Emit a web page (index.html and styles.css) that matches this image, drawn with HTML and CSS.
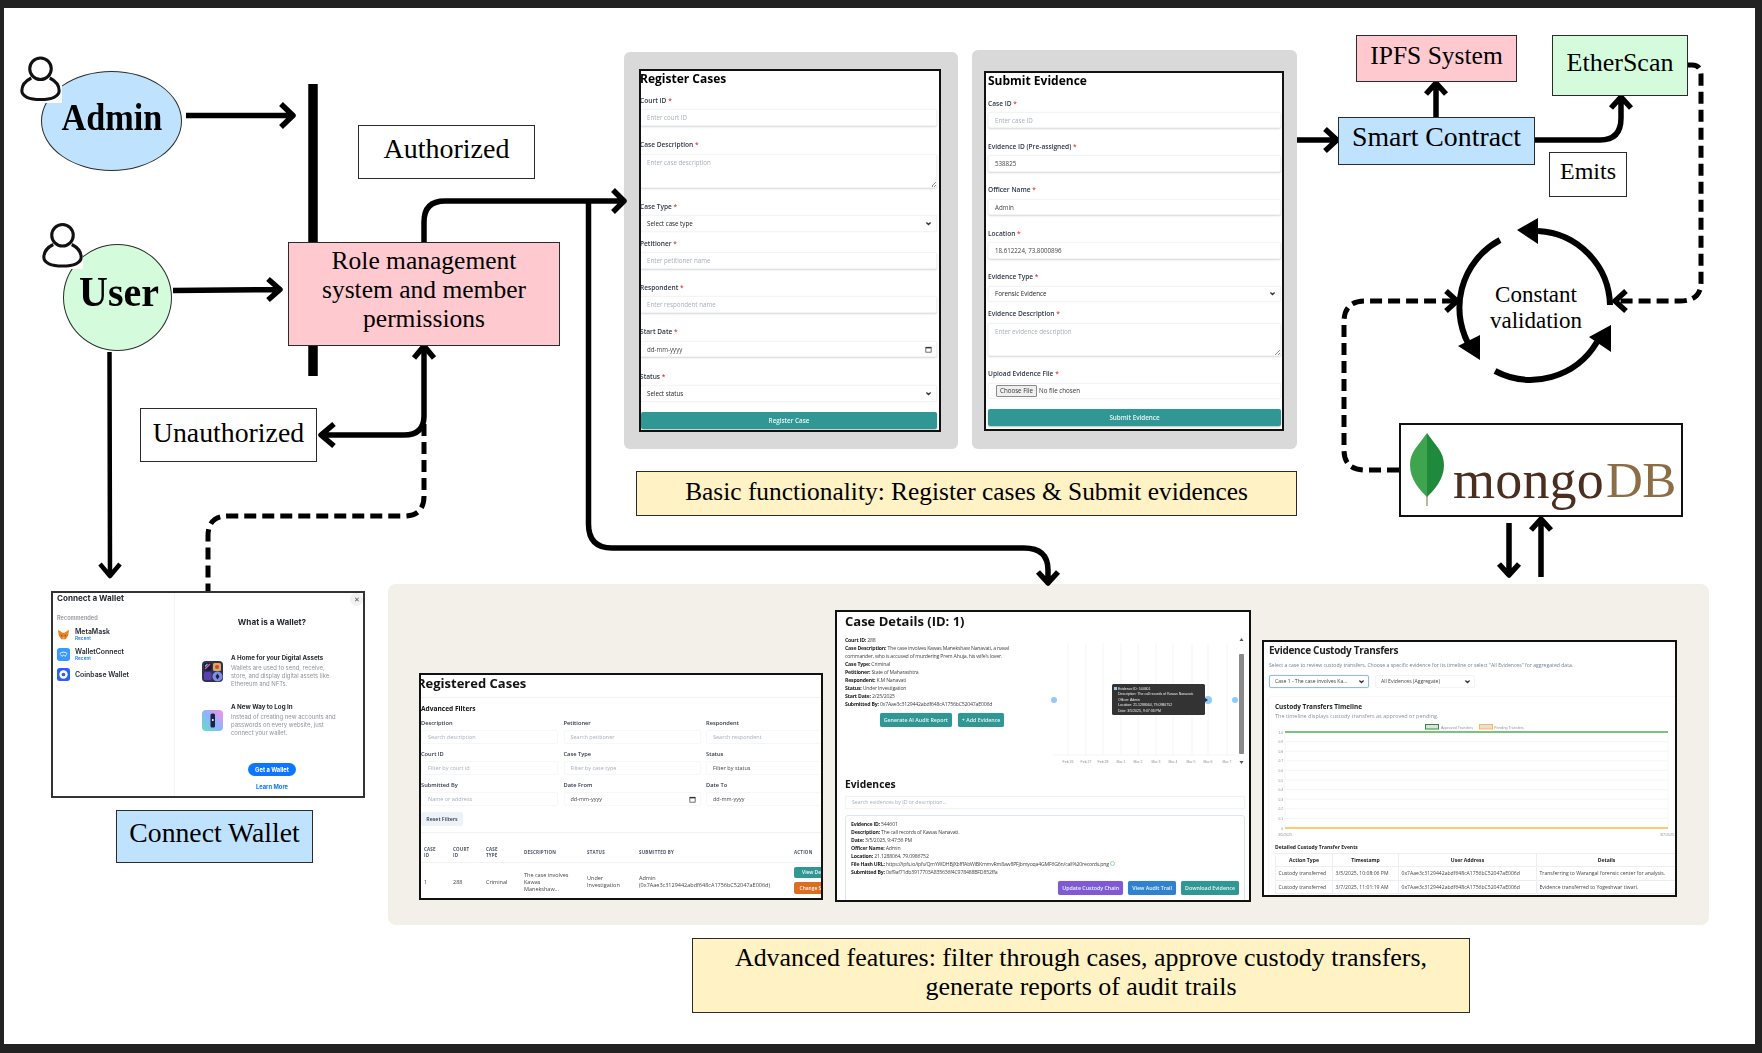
FILE: index.html
```html
<!DOCTYPE html>
<html lang="en">
<head>
<meta charset="utf-8">
<title>Evidence management workflow</title>
<link rel="stylesheet" href="styles.css">
</head>
<body>
<svg class="defs" width="0" height="0" aria-hidden="true">
  <symbol id="chev" viewBox="0 0 10 10"><path d="M2 3.5 5 6.5 8 3.5" fill="none" stroke="#333" stroke-width="1.8"/></symbol>
  <symbol id="cal" viewBox="0 0 10 10"><rect x="1.2" y="1.8" width="7.6" height="7" fill="none" stroke="#333" stroke-width="1"/><rect x="1.2" y="1.4" width="7.6" height="2" fill="#333"/></symbol>
  <symbol id="person" viewBox="0 0 40 46"><circle cx="20" cy="14" r="10.5" fill="none" stroke="#111" stroke-width="3"/><path d="M11 23C5 26 1.8 31 1.8 35.5 1.8 41 9 44 20 44S38.200 41 38.200 35.500C38.200 31 35 26 29 23" fill="none" stroke="#111" stroke-width="3"/></symbol>
</svg>

<main class="page">
  <div class="sheet"></div>
  <div class="gray gray-register"></div>
  <div class="gray gray-submit"></div>
  <div class="beige"></div>

  <svg class="wires" viewBox="0 0 1762 1053" width="1762" height="1053" aria-hidden="true">
    <path d="M313 84V376" fill="none" stroke="#000" stroke-width="9.500"/>
    <g fill="none" stroke="#000" stroke-width="5.500" stroke-linejoin="round">
      <path d="M186 115.500H292M281 104 293 115.500 281 127"/>
      <path d="M173 290.500 279 289.500M268 279 280 289.500 268 300"/>
      <path stroke-width="4.500" d="M109.500 352 110 574M100 564 110 576 120 564"/>
      <path d="M424 345V416Q424 435 404 435H322M334 424 321 435 334 446"/>
      <path d="M414 358 424 346 434 358"/>
      <path d="M424 242V222Q424 201 445 201H623M613 190 624 201 613 212"/>
      <path d="M588.500 201V524Q588.500 548 612 548H1024Q1048 548 1048 570V582M1038 572 1048 583 1058 572"/>
      <path d="M1297 140H1336M1325 129 1337 140 1325 151"/>
      <path d="M1436 117V84M1426 94 1436 83 1446 94"/>
      <path d="M1535 140H1600Q1621 140 1621 118V98M1611 108 1621 97 1631 108"/>
      <path d="M1509 523V574M1499 564 1509 575 1519 564"/>
      <path d="M1541 577V520M1531 530 1541 519 1551 530"/>
      <path d="M1446 291 1457 301 1446 311"/>
      <path d="M1626 291 1615 301 1626 311"/>
    </g>
    <g fill="none" stroke="#000" stroke-width="5" stroke-dasharray="12 6">
      <path d="M424 424V496Q424 516 404 516H228Q208 516 208 536V592"/>
      <path d="M1688 65H1692Q1701 65 1701 75V282Q1701 301 1680 301H1618"/>
      <path d="M1399 470H1365Q1344 470 1344 450V322Q1344 301 1365 301H1455"/>
    </g>
    <g fill="none" stroke="#000" stroke-width="6">
      <path d="M1610 305A76 76 0 0 0 1538 231"/>
      <path d="M1500 240A77 77 0 0 0 1472 350"/>
      <path d="M1495 371A77 77 0 0 0 1597 342"/>
    </g>
    <path d="M1517 230 1538 218V244ZM1458 346 1480 335V360ZM1589 337 1611 325V352Z"/>
  </svg>

  <div class="oval admin"><span class="admin-word">Admin</span></div>
  <div class="oval user"><span class="user-word">User</span></div>
  <svg class="person person-admin"><use href="#person"/></svg>
  <svg class="person person-user"><use href="#person"/></svg>

  <div class="box authorized"><span>Authorized</span></div>
  <div class="box unauthorized"><span>Unauthorized</span></div>
  <div class="box pink role">Role management<br>system and member<br>permissions</div>
  <div class="box pink ipfs"><span>IPFS System</span></div>
  <div class="box green etherscan"><span>EtherScan</span></div>
  <div class="box blue contract"><span>Smart Contract</span></div>
  <div class="box emits"><span>Emits</span></div>
  <div class="validation">Constant<br>validation</div>

  <div class="box mongo">
    <svg class="leaf" viewBox="0 0 36 74" width="36" height="74">
      <path d="M18 62V74" stroke="#bdb596" stroke-width="2"/>
      <path d="M18 1C9 14 1 20 1 33 1 48 11 58 18 65Z" fill="#3ea54e"/>
      <path d="M18 1C27 14 35 20 35 33 35 48 25 58 18 65Z" fill="#1f8a3c"/>
    </svg>
    <span class="mongo-word">mongo</span><span class="db-word">DB</span>
  </div>

  <div class="box yellow caption-basic"><span>Basic functionality: Register cases &amp; Submit evidences</span></div>
  <div class="box yellow caption-advanced">Advanced features: filter through cases, approve custody transfers,<br>generate reports of audit trails</div>
  <div class="box blue connect"><span>Connect Wallet</span></div>

  <section class="shot form-card register">
    <h2 class="form-title">Register Cases</h2>
    <div class="field"><div class="label">Court ID <b>*</b></div><div class="input ph">Enter court ID</div></div>
    <div class="field"><div class="label">Case Description <b>*</b></div><div class="input ph area">Enter case description</div></div>
    <div class="field tight"><div class="label">Case Type <b>*</b></div><div class="input plain between">Select case type<svg class="ico"><use href="#chev"/></svg></div></div>
    <div class="field"><div class="label">Petitioner <b>*</b></div><div class="input ph">Enter petitioner name</div></div>
    <div class="field"><div class="label">Respondent <b>*</b></div><div class="input ph">Enter respondent name</div></div>
    <div class="field"><div class="label">Start Date <b>*</b></div><div class="input val between">dd-mm-yyyy<svg class="ico"><use href="#cal"/></svg></div></div>
    <div class="field last"><div class="label">Status <b>*</b></div><div class="input plain between">Select status<svg class="ico"><use href="#chev"/></svg></div></div>
    <div class="submit">Register Case</div>
  </section>

  <section class="shot form-card evidence">
    <h2 class="form-title">Submit Evidence</h2>
    <div class="field"><div class="label">Case ID <b>*</b></div><div class="input ph">Enter case ID</div></div>
    <div class="field"><div class="label">Evidence ID (Pre-assigned) <b>*</b></div><div class="input val">538825</div></div>
    <div class="field"><div class="label">Officer Name <b>*</b></div><div class="input val">Admin</div></div>
    <div class="field"><div class="label">Location <b>*</b></div><div class="input val">18.612224, 73.8000896</div></div>
    <div class="field tight"><div class="label">Evidence Type <b>*</b></div><div class="input plain between">Forensic Evidence<svg class="ico"><use href="#chev"/></svg></div></div>
    <div class="field"><div class="label">Evidence Description <b>*</b></div><div class="input ph area">Enter evidence description</div></div>
    <div class="field last"><div class="label">Upload Evidence File <b>*</b></div><div class="input plain file"><span class="choose">Choose File</span>No file chosen</div></div>
    <div class="submit">Submit Evidence</div>
  </section>

  <section class="shot wallet">
    <button class="wallet-close">✕</button>
    <div class="wallet-left">
      <h3 class="wallet-title">Connect a Wallet</h3>
      <div class="wallet-rec">Recommended</div>
      <div class="wallet-row">
        <svg class="wallet-ico" viewBox="0 0 14 14"><path d="M1 2 6 5H8L13 2 12 8 9.500 12H4.500L2 8Z" fill="#e8821e"/><path d="M4.500 7.500 6 8.500 4.500 9ZM9.500 7.500 8 8.500 9.500 9Z" fill="#233447"/><path d="M5.500 10H8.500L7 12.500Z" fill="#c0ad9e"/></svg>
        <div><div class="wallet-name">MetaMask</div><div class="wallet-recent">Recent</div></div>
      </div>
      <div class="wallet-row">
        <svg class="wallet-ico" viewBox="0 0 14 14"><rect width="14" height="14" rx="3" fill="#3b99fc"/><path d="M3 6C5 4 9 4 11 6M3.500 7 5.500 9 7 7.500 8.500 9 10.500 7" fill="none" stroke="#fff" stroke-width="1"/></svg>
        <div><div class="wallet-name">WalletConnect</div><div class="wallet-recent">Recent</div></div>
      </div>
      <div class="wallet-row">
        <svg class="wallet-ico" viewBox="0 0 14 14"><rect width="14" height="14" rx="3" fill="#2c5ff6"/><circle cx="7" cy="7" r="4.500" fill="#fff"/><circle cx="7" cy="7" r="2" fill="#2c5ff6"/></svg>
        <div class="wallet-name">Coinbase Wallet</div>
      </div>
    </div>
    <div class="wallet-right">
      <h3 class="wallet-what">What is a Wallet?</h3>
      <div class="wallet-block first">
        <svg class="wallet-art" viewBox="0 0 21 21"><rect width="21" height="21" rx="4" fill="#2e3350"/><rect x="2" y="2" width="7.500" height="7.500" rx="1.500" fill="#141a3a"/><path d="M3 8 8 3" stroke="#f2577a" stroke-width="1.500"/><path d="M3 5.500 5.500 3" stroke="#4cc9f0" stroke-width="1.200"/><rect x="11" y="2" width="8" height="8" rx="1.500" fill="#e9a45b"/><circle cx="15" cy="6" r="2" fill="#b6562b"/><rect x="2" y="11" width="7.500" height="8" rx="1.500" fill="#5a3fb0"/><circle cx="15.500" cy="15.500" r="5" fill="#7f8fe8"/><path d="M15.500 12.500 17.500 15.500 15.500 18.500 13.500 15.500Z" fill="#1c2340"/></svg>
        <div><div class="wallet-h">A Home for your Digital Assets</div><p class="wallet-p">Wallets are used to send, receive,<br>store, and display digital assets like<br>Ethereum and NFTs.</p></div>
      </div>
      <div class="wallet-block">
        <svg class="wallet-art" viewBox="0 0 21 21"><defs><linearGradient id="lg" x1="0" y1="1" x2="1" y2="0"><stop offset="0" stop-color="#5fe0c0"/><stop offset=".5" stop-color="#8cb4ff"/><stop offset="1" stop-color="#ff8fe0"/></linearGradient></defs><rect width="21" height="21" rx="4" fill="url(#lg)"/><rect x="8.500" y="3.500" width="4.500" height="14" rx="1.500" fill="#20233f"/><circle cx="10.800" cy="10" r="1" fill="#fff"/></svg>
        <div><div class="wallet-h">A New Way to Log In</div><p class="wallet-p">Instead of creating new accounts and<br>passwords on every website, just<br>connect your wallet.</p></div>
      </div>
      <div class="wallet-get">Get a Wallet</div>
      <div class="wallet-learn">Learn More</div>
    </div>
  </section>

  <section class="shot cases">
    <h2 class="cases-title">Registered Cases</h2>
    <h3 class="cases-sub">Advanced Filters</h3>
    <div class="filters">
      <div><div class="f-label">Description</div><div class="f-input ph">Search description</div></div>
      <div><div class="f-label">Petitioner</div><div class="f-input ph">Search petitioner</div></div>
      <div><div class="f-label">Respondent</div><div class="f-input ph">Search respondent</div></div>
      <div><div class="f-label">Court ID</div><div class="f-input ph">Filter by court id</div></div>
      <div><div class="f-label">Case Type</div><div class="f-input ph">Filter by case type</div></div>
      <div><div class="f-label">Status</div><div class="f-input val">Filter by status</div></div>
      <div><div class="f-label">Submitted By</div><div class="f-input ph">Name or address</div></div>
      <div><div class="f-label">Date From</div><div class="f-input val between">dd-mm-yyyy<svg class="ico"><use href="#cal"/></svg></div></div>
      <div><div class="f-label">Date To</div><div class="f-input val">dd-mm-yyyy</div></div>
    </div>
    <div class="reset">Reset Filters</div>
    <table class="case-table">
      <colgroup><col class="c1"><col class="c2"><col class="c3"><col class="c4"><col class="c5"><col class="c6"><col class="c7"></colgroup>
      <thead><tr><th>CASE<br>ID</th><th>COURT<br>ID</th><th>CASE<br>TYPE</th><th>DESCRIPTION</th><th>STATUS</th><th>SUBMITTED BY</th><th>ACTION</th></tr></thead>
      <tbody><tr><td>1</td><td>288</td><td>Criminal</td><td>The case involves<br>Kawas<br>Manekshaw...</td><td>Under<br>Investigation</td><td>Admin<br>(0x7Aae3c3129442abdf648cA1756bC52047aE006d)</td><td><span class="act teal">View Details</span><span class="act orange">Change Status</span></td></tr></tbody>
    </table>
  </section>

  <section class="shot details">
    <h2 class="d-title">Case Details (ID: 1)</h2>
    <div class="d-row">
      <div class="d-info">
        <div class="d-lines">
          <div><b>Court ID:</b> 288</div>
          <div><b>Case Description:</b> The case involves Kawas Manekshaw Nanavati, a naval<br>commander, who is accused of murdering Prem Ahuja, his wife's lover.</div>
          <div><b>Case Type:</b> Criminal</div>
          <div><b>Petitioner:</b> State of Maharashtra</div>
          <div><b>Respondent:</b> K.M Nanavati</div>
          <div><b>Status:</b> Under Investigation</div>
          <div><b>Start Date:</b> 2/25/2025</div>
          <div><b>Submitted By:</b> 0x7Aae3c3129442abdf648cA1756bC52047aE006d</div>
        </div>
        <div class="d-actions"><span class="d-btn">Generate AI Audit Report</span><span class="d-btn">+ Add Evidence</span></div>
      </div>
      <svg class="d-chart" viewBox="0 0 196 138" width="196" height="138">
        <g stroke="#eceef1" stroke-width=".6"><path d="M18 13V125M36 13V125M53 13V125M71 13V125M88 13V125M106 13V125M123 13V125M142 13V125M158 13V125M177 13V125"/><path d="M3 125H186"/></g>
        <g class="axis"><text x="18" y="133">Feb 26</text><text x="36" y="133">Feb 27</text><text x="53" y="133">Feb 28</text><text x="71" y="133">Mar 1</text><text x="88" y="133">Mar 2</text><text x="106" y="133">Mar 3</text><text x="123" y="133">Mar 4</text><text x="141" y="133">Mar 5</text><text x="158" y="133">Mar 6</text><text x="177" y="133">Mar 7</text></g>
        <circle cx="4" cy="70" r="3" fill="#90caf9"/><circle cx="158" cy="70" r="4" fill="#90caf9"/><circle cx="185" cy="70" r="3" fill="#90caf9"/>
        <rect x="62" y="54" width="93" height="31" rx="1.500" fill="#333"/>
        <rect x="64" y="57" width="3" height="3" fill="#90caf9"/>
        <path d="M155 68 158 70 155 72Z" fill="#333"/>
        <g class="tip"><text x="68" y="59.500">Evidence ID: 544601</text><text x="68" y="65">Description: The call records of Kawas Nanavati.</text><text x="68" y="70.500">Officer: Admin</text><text x="68" y="76">Location: 21.1288064, 79.0986752</text><text x="68" y="81.500">Date: 3/5/2025, 9:47:36 PM</text></g>
        <rect x="189" y="24" width="5" height="100" rx="1" fill="#8a8a8a"/>
        <path d="M189.500 11 191.500 8 193.500 11ZM189.500 131 191.500 134 193.500 131Z" fill="#555"/>
      </svg>
    </div>
    <h3 class="d-ev">Evidences</h3>
    <div class="d-search">Search evidences by ID or description...</div>
    <div class="d-card">
      <div class="d-lines">
        <div><b>Evidence ID:</b> 544601</div>
        <div><b>Description:</b> The call records of Kawas Nanavati.</div>
        <div><b>Date:</b> 3/5/2025, 9:47:36 PM</div>
        <div><b>Officer Name:</b> Admin</div>
        <div><b>Location:</b> 21.1288064, 79.0986752</div>
        <div><b>File Hash URL:</b> https://ipfs.io/ipfs/QmYWDHBjXbfffAbWiBKmmvRm8aw8PFjbmyoqa4GMF6G6n/call%20records.png <i class="ok"></i></div>
        <div><b>Submitted By:</b> 0xf9af71db3917703A835636f4C978488BFD852ffa</div>
      </div>
      <div class="d-foot"><span class="d-btn purple">Update Custody Chain</span><span class="d-btn sky">View Audit Trail</span><span class="d-btn">Download Evidence</span></div>
    </div>
  </section>

  <section class="shot custody">
    <h2 class="c-title">Evidence Custody Transfers</h2>
    <p class="c-sub">Select a case to review custody transfers. Choose a specific evidence for its timeline or select "All Evidences" for aggregated data.</p>
    <div class="c-selects">
      <div class="c-select active">Case 1 - The case involves Ka...<svg class="ico"><use href="#chev"/></svg></div>
      <div class="c-select">All Evidences (Aggregate)<svg class="ico"><use href="#chev"/></svg></div>
    </div>
    <div class="c-panel">
      <h3 class="c-h">Custody Transfers Timeline</h3>
      <p class="c-desc">The timeline displays custody transfers as approved or pending.</p>
      <svg class="c-chart" viewBox="0 0 408 122" width="408" height="122">
        <g stroke="#eff0f2" stroke-width=".6" fill="none"><path d="M16 21.600H399M16 31.200H399M16 40.800H399M16 50.400H399M16 60H399M16 69.600H399M16 79.200H399M16 88.800H399M16 98.400H399M16 12V108M399 12V108"/></g>
        <g class="ticks"><text x="14" y="13.500">1.0</text><text x="14" y="23">0.9</text><text x="14" y="32.700">0.8</text><text x="14" y="42.300">0.7</text><text x="14" y="52">0.6</text><text x="14" y="61.500">0.5</text><text x="14" y="71">0.4</text><text x="14" y="80.700">0.3</text><text x="14" y="90.300">0.2</text><text x="14" y="100">0.1</text><text x="14" y="109.500">0</text></g>
        <path d="M16 12H399" stroke="#4caf50" stroke-width="1.300"/><path d="M16 108H399" stroke="#ffb74d" stroke-width="1.300"/>
        <rect x="156.500" y="4.500" width="13" height="4.500" fill="#e0e0e0" stroke="#2e8b3c"/>
        <rect x="210.500" y="4.500" width="13" height="4.500" fill="#e0e0e0" stroke="#ffb74d"/>
        <g class="legend"><text x="172" y="8.500">Approved Transfers</text><text x="225" y="8.500">Pending Transfers</text></g>
        <g class="legend"><text x="9" y="116">3/5/2025</text><text x="391" y="116">3/7/2025</text></g>
      </svg>
      <h4 class="c-ev">Detailed Custody Transfer Events</h4>
      <table class="c-table">
        <colgroup><col class="t1"><col class="t2"><col class="t3"><col class="t4"></colgroup>
        <thead><tr><th>Action Type</th><th>Timestamp</th><th>User Address</th><th>Details</th></tr></thead>
        <tbody>
          <tr><td>Custody transferred</td><td>3/5/2025, 10:08:06 PM</td><td>0x7Aae3c3129442abdf648cA1756bC52047aE006d</td><td>Transferring to Warangal forensic center for analysis.</td></tr>
          <tr><td>Custody transferred</td><td>3/7/2025, 11:01:19 AM</td><td>0x7Aae3c3129442abdf648cA1756bC52047aE006d</td><td>Evidence transferred to Yogeshwar tiwari.</td></tr>
        </tbody>
      </table>
    </div>
  </section>
</main>
</body>
</html>
```
FILE: styles.css
```css
* { box-sizing: border-box; }
html, body { margin: 0; padding: 0; background: #222; }
body { width: 1762px; height: 1053px; overflow: hidden; font-family: "Liberation Serif", serif; color: #000; }
.defs { position: absolute; }
h2, h3, h4, p { margin: 0; }

.page { position: relative; width: 1762px; height: 1053px; background: #222; overflow: hidden; }
.sheet { position: absolute; left: 4px; top: 8px; width: 1751px; height: 1036px; background: #fff; }
.wires { position: absolute; left: 0; top: 0; }

/* canvas nodes */
.gray { position: absolute; background: #d9d9d9; border-radius: 6px; }
.gray-register { left: 624px; top: 52px; width: 334px; height: 397px; }
.gray-submit { left: 972px; top: 50px; width: 325px; height: 399px; }
.beige { position: absolute; left: 388px; top: 584px; width: 1321px; height: 341px; background: #f3f0e9; border-radius: 8px; }

.oval { position: absolute; display: flex; justify-content: center; align-items: center; border: 1.5px solid #2b2b2b; border-radius: 50%; font-weight: 700; }
.admin { left: 41px; top: 71px; width: 141px; height: 100px; background: #bfe3ff; font-size: 38px; padding-bottom: 9px; }
.user { left: 63px; top: 244px; width: 109px; height: 107px; background: #d4fcdc; font-size: 43px; padding-bottom: 12px; padding-left: 2px; }
.admin-word { display: inline-block; transform: scaleX(.9); }
.user-word { display: inline-block; transform: scaleX(.93); }

.person { position: absolute; background: #fff; }
.person-admin { left: 19px; top: 53px; width: 43px; height: 50px; padding: 1px; }
.person-user { left: 42px; top: 220px; width: 41px; height: 49px; padding: 0; }

.box { position: absolute; display: flex; justify-content: center; align-items: center; border: 1.500px solid #2b2b2b; background: #fff; text-align: center; }
.authorized { left: 358px; top: 125px; width: 177px; height: 54px; font-size: 28px; padding-bottom: 6px; }
.unauthorized { left: 140px; top: 408px; width: 177px; height: 54px; font-size: 27.800px; padding-bottom: 5px; }
.pink { background: #ffc9d0; }
.green { background: #d4fcdc; }
.blue { background: #bfe3ff; }
.yellow { background: #fff2c4; }
.role { left: 288px; top: 242px; width: 272px; height: 104px; font-size: 25.500px; line-height: 29px; padding-bottom: 9px; }
.ipfs { left: 1356px; top: 35px; width: 161px; height: 47px; font-size: 25.500px; padding-bottom: 5px; }
.etherscan { left: 1552px; top: 35px; width: 136px; height: 61px; font-size: 26px; padding-bottom: 5px; }
.contract { left: 1338px; top: 117px; width: 197px; height: 48px; font-size: 27.800px; padding-bottom: 9px; }
.emits { left: 1549px; top: 152px; width: 78px; height: 45px; font-size: 24px; padding-bottom: 6px; }
.validation { position: absolute; left: 1466px; top: 282px; width: 140px; text-align: center; font-size: 23px; line-height: 26px; }
.caption-basic { left: 636px; top: 471px; width: 661px; height: 45px; font-size: 25.400px; padding-bottom: 4px; }
.caption-advanced { left: 692px; top: 938px; width: 778px; height: 75px; font-size: 25.950px; line-height: 29px; padding-bottom: 8px; }
.connect { left: 116px; top: 810px; width: 197px; height: 53px; font-size: 27.700px; padding-bottom: 7px; }

.mongo { left: 1399px; top: 423px; width: 284px; height: 94px; border: 2px solid #111; justify-content: flex-start; align-items: flex-start; padding: 7px 0 0 8px; }
.leaf { flex: none; margin-right: 8px; }
.mongo-word, .db-word { font-size: 54px; line-height: 62px; }
.mongo-word { color: #4a2e20; letter-spacing: .2px; margin-top: 17px; }
.db-word { color: #8c6d46; font-size: 51px; letter-spacing: -.5px; margin: 17px 0 0 2px; }

/* screenshots */
.shot { position: absolute; background: #fff; border: 2px solid #111; overflow: hidden; font-family: "Open Sans", "Noto Sans", sans-serif; filter: blur(.35px); color: #222; }

.form-card { display: flex; flex-direction: column; }
.register { left: 639px; top: 69px; width: 302px; height: 363px; padding: 0 2px 0 0; }
.evidence { left: 984px; top: 71px; width: 300px; height: 360px; padding: 0 1px 0 2px; }
.form-title { font-size: 12px; line-height: 16px; font-weight: 700; color: #000; margin-bottom: 9px; white-space: nowrap; }
.register .form-title { margin-left: -1px; }
.register .field { margin-left: -1px; }
.evidence .form-title { margin-bottom: 9.500px; }
.field { margin-bottom: 14.500px; }
.evidence .field { margin-bottom: 13.700px; }
.field.tight { margin-bottom: 7px; }
.field.last { margin-bottom: 10px; }
.label { font-size: 6.600px; line-height: 10px; height: 10px; margin-bottom: 3.300px; font-weight: 600; color: #2d3748; white-space: nowrap; }
.label b { color: #e53e3e; font-weight: 600; }
.input { height: 16.500px; padding: 0 4px 0 6px; font-size: 6.200px; display: flex; align-items: center; border: 1px solid #f3f4f6; border-radius: 2px; background: #fff; box-shadow: 0 1px 2px rgba(0,0,0,.16); }
.plain { box-shadow: 0 0 1px rgba(0,0,0,.12); color: #222; }
.val { color: #444; }
.ph { color: #a5aebc; }
.area { position: relative; height: 34px; align-items: flex-start; padding-top: 3px; }
.evidence .area { height: 33px; }
.area::after { content: ""; position: absolute; right: 0; bottom: 0; width: 5px; height: 5px; background: linear-gradient(135deg, transparent 50%, #888 50%, #888 60%, transparent 60%, transparent 75%, #888 75%, #888 85%, transparent 85%); }
.between { justify-content: space-between; }
.ico { width: 7px; height: 7px; flex: none; }
.file { padding-left: 7px; color: #333; }
.choose { background: #efefef; border: .8px solid #8a8a8a; border-radius: 1px; padding: 1px 3px; margin-right: 2px; line-height: 8px; }
.submit { height: 17px; background: #319795; color: #e9f7f6; font-size: 6.300px; font-weight: 600; display: flex; align-items: center; justify-content: center; border-radius: 2px; box-shadow: 0 1px 2px rgba(0,0,0,.25); }

.wallet { left: 51px; top: 591px; width: 314px; height: 207px; border-color: #333; display: flex; font-family: "Inter", "Open Sans", sans-serif; }
.wallet-left { width: 122px; padding-left: 4px; border-right: 1px solid #f4f4f4; flex: none; }
.wallet-title { font-size: 8.100px; line-height: 10px; font-weight: 700; color: #25292e; }
.wallet-rec { margin: 11.500px 0 6.500px; font-size: 5.600px; line-height: 7px; font-weight: 600; color: #8f9399; }
.wallet-row { height: 13px; margin-bottom: 7px; display: flex; align-items: center; gap: 5px; }
.wallet-ico { width: 13px; height: 13px; flex: none; }
.wallet-name { font-size: 6.900px; line-height: 8px; font-weight: 600; color: #25292e; }
.wallet-recent { font-size: 4.800px; line-height: 5px; font-weight: 500; color: #0e76fd; }
.wallet-right { flex: 1; padding: 24px 0 0 6px; display: flex; flex-direction: column; }
.wallet-what { font-size: 8.200px; line-height: 10px; text-align: center; font-weight: 700; color: #25292e; margin-bottom: 27px; }
.wallet-block { display: flex; align-items: center; gap: 8px; margin: 0 0 15px 21px; }
.wallet-art { width: 21px; height: 21px; flex: none; }
.wallet-h { font-size: 6.200px; line-height: 8px; font-weight: 700; color: #25292e; white-space: nowrap; }
.wallet-p { margin-top: 2px; font-size: 5.900px; line-height: 8px; color: #8f9399; white-space: nowrap; }
.wallet-get { align-self: center; margin: 11px 0 7px; width: 48px; height: 13px; border-radius: 7px; background: #0e76fd; color: #fff; font-size: 5.800px; font-weight: 700; display: flex; align-items: center; justify-content: center; }
.wallet-learn { text-align: center; font-size: 5.800px; line-height: 8px; font-weight: 700; color: #0e76fd; }
.wallet-close { position: absolute; right: 0; top: 0; width: 13px; height: 13px; padding: 0; border: 0; border-radius: 50%; background: #f1f1f1; color: #555; font-size: 7px; line-height: 13px; }

.cases { left: 419px; top: 673px; width: 404px; height: 227px; }
.cases-title { margin-left: -4px; height: 23px; line-height: 17px; font-size: 13px; font-weight: 700; color: #111; border-bottom: 1px solid #f1f2f4; white-space: nowrap; }
.cases-sub { margin: 7px 0 6.500px; font-size: 6.600px; line-height: 8px; font-weight: 700; color: #111; }
.filters { display: grid; grid-template-columns: 137px 137px 137px; column-gap: 5.500px; row-gap: 6.500px; }
.f-label { font-size: 5.700px; line-height: 7px; height: 7px; margin-bottom: 3.500px; font-weight: 600; color: #2d3748; white-space: nowrap; }
.f-input { height: 14px; padding: 0 4px 0 6px; border: 1px solid #f6f7f8; border-radius: 2px; display: flex; align-items: center; font-size: 5.500px; }
.reset { margin-top: 6px; width: 42px; height: 14px; background: #edf2f7; border-radius: 2px; font-size: 5.300px; font-weight: 600; color: #2d3748; display: flex; align-items: center; justify-content: center; }
.case-table { margin-top: 6px; width: 430px; table-layout: fixed; border-collapse: collapse; border-top: 1px solid #f1f2f4; font-size: 5.500px; line-height: 7px; color: #444; }
.c1 { width: 29px; } .c2 { width: 33px; } .c3 { width: 38px; } .c4 { width: 63px; } .c5 { width: 52px; } .c6 { width: 155px; } .c7 { width: 60px; }
.case-table th { height: 30px; padding: 10px 0 0 3px; text-align: left; font-size: 4.500px; line-height: 5.500px; font-weight: 700; letter-spacing: .2px; color: #4a5568; border-bottom: 1px solid #f1f2f4; }
.case-table td { padding: 0 0 0 3px; height: 39px; white-space: nowrap; }
.act { display: flex; align-items: center; justify-content: center; width: 45px; height: 11.500px; margin-bottom: 4px; border-radius: 2px; color: #f4fbfb; font-size: 4.900px; font-weight: 600; }
.teal { background: #319795; }
.orange { background: #dd6b20; }

.details { left: 835px; top: 610px; width: 416px; height: 292px; padding-left: 8px; }
.d-title { height: 18px; font-size: 13px; line-height: 18px; font-weight: 700; color: #111; }
.d-row { height: 138px; display: flex; }
.d-info { width: 205px; padding-top: 6px; flex: none; }
.d-lines { font-size: 5.200px; letter-spacing: -.2px; line-height: 8px; color: #444; white-space: nowrap; }
.d-lines b { color: #222; font-weight: 700; }
.d-actions { margin-top: 5px; padding-right: 11px; display: flex; justify-content: center; gap: 6px; }
.d-btn { height: 14px; padding: 0 4px; background: #319795; color: #eaf7f6; font-size: 5.300px; font-weight: 600; border-radius: 2px; display: flex; align-items: center; white-space: nowrap; box-shadow: 0 0 1px rgba(0,0,0,.3); }
.d-chart { flex: none; }
.axis text { font-size: 3.500px; fill: #8a8f98; text-anchor: middle; font-family: "Liberation Sans", sans-serif; }
.tip text { font-size: 3.500px; fill: #eee; font-family: "Liberation Sans", sans-serif; }
.d-ev { margin-top: 9px; height: 14px; font-size: 10.300px; line-height: 14px; font-weight: 700; color: #111; }
.d-search { margin-top: 5px; width: 400px; height: 12.500px; padding-left: 6px; border: 1px solid #f2f3f5; border-radius: 2px; font-size: 5.200px; display: flex; align-items: center; color: #a5aebc; box-shadow: 0 0 1px rgba(0,0,0,.15); }
.d-card { margin-top: 6px; width: 400px; height: 90px; padding: 4px 5px 0; border: 1px solid #dbe5f0; border-radius: 3px; }
.d-foot { margin-top: 5px; display: flex; justify-content: flex-end; gap: 5px; }
.purple { background: #805ad5; }
.sky { background: #3182ce; }
.ok { display: inline-block; width: 5px; height: 5px; border: 1px solid #8fdca8; border-radius: 50%; vertical-align: 0; }

.custody { left: 1262px; top: 640px; width: 415px; height: 257px; padding: 1px 0 0 5px; }
.c-title { height: 14px; font-size: 10px; letter-spacing: -.3px; line-height: 14px; font-weight: 700; color: #222; white-space: nowrap; }
.c-sub { margin-top: 4px; font-size: 5.100px; line-height: 8px; color: #718096; white-space: nowrap; }
.c-selects { margin-top: 6px; display: flex; gap: 6px; }
.c-select { width: 100px; height: 12.500px; padding: 0 3px 0 5px; border: 1px solid #f3f4f6; border-radius: 2px; font-size: 5.100px; color: #444; display: flex; align-items: center; justify-content: space-between; }
.c-select.active { border: 1px solid #90bde8; box-shadow: 0 0 1px #90bde8; }
.c-panel { margin-top: 9px; padding: 5px 0 0 6px; width: 420px; height: 210px; border-radius: 2px; box-shadow: 0 0 2px rgba(0,0,0,.12); }
.c-h { font-size: 6.400px; line-height: 10px; font-weight: 700; color: #222; white-space: nowrap; }
.c-desc { margin-top: 1.500px; font-size: 5.500px; line-height: 7px; color: #8a93a0; white-space: nowrap; }
.c-chart { display: block; margin-left: -6px; }
.ticks text { font-size: 3.300px; fill: #8a8f98; text-anchor: end; font-family: "Liberation Sans", sans-serif; }
.legend text { font-size: 3.700px; fill: #9096a0; font-family: "Liberation Sans", sans-serif; }
.c-ev { margin-top: 1.500px; font-size: 5px; line-height: 7px; font-weight: 700; color: #222; white-space: nowrap; }
.c-table { margin-top: 2px; table-layout: fixed; width: 401px; border-collapse: collapse; font-size: 5.100px; color: #444; }
.t1 { width: 57px; } .t2 { width: 66px; } .t3 { width: 138px; } .t4 { width: 140px; }
.c-table th, .c-table td { border: .7px solid #eceef1; height: 13.500px; padding: 0 2.500px; white-space: nowrap; font-weight: 400; }
.c-table th { font-weight: 700; color: #222; text-align: center; }
```
